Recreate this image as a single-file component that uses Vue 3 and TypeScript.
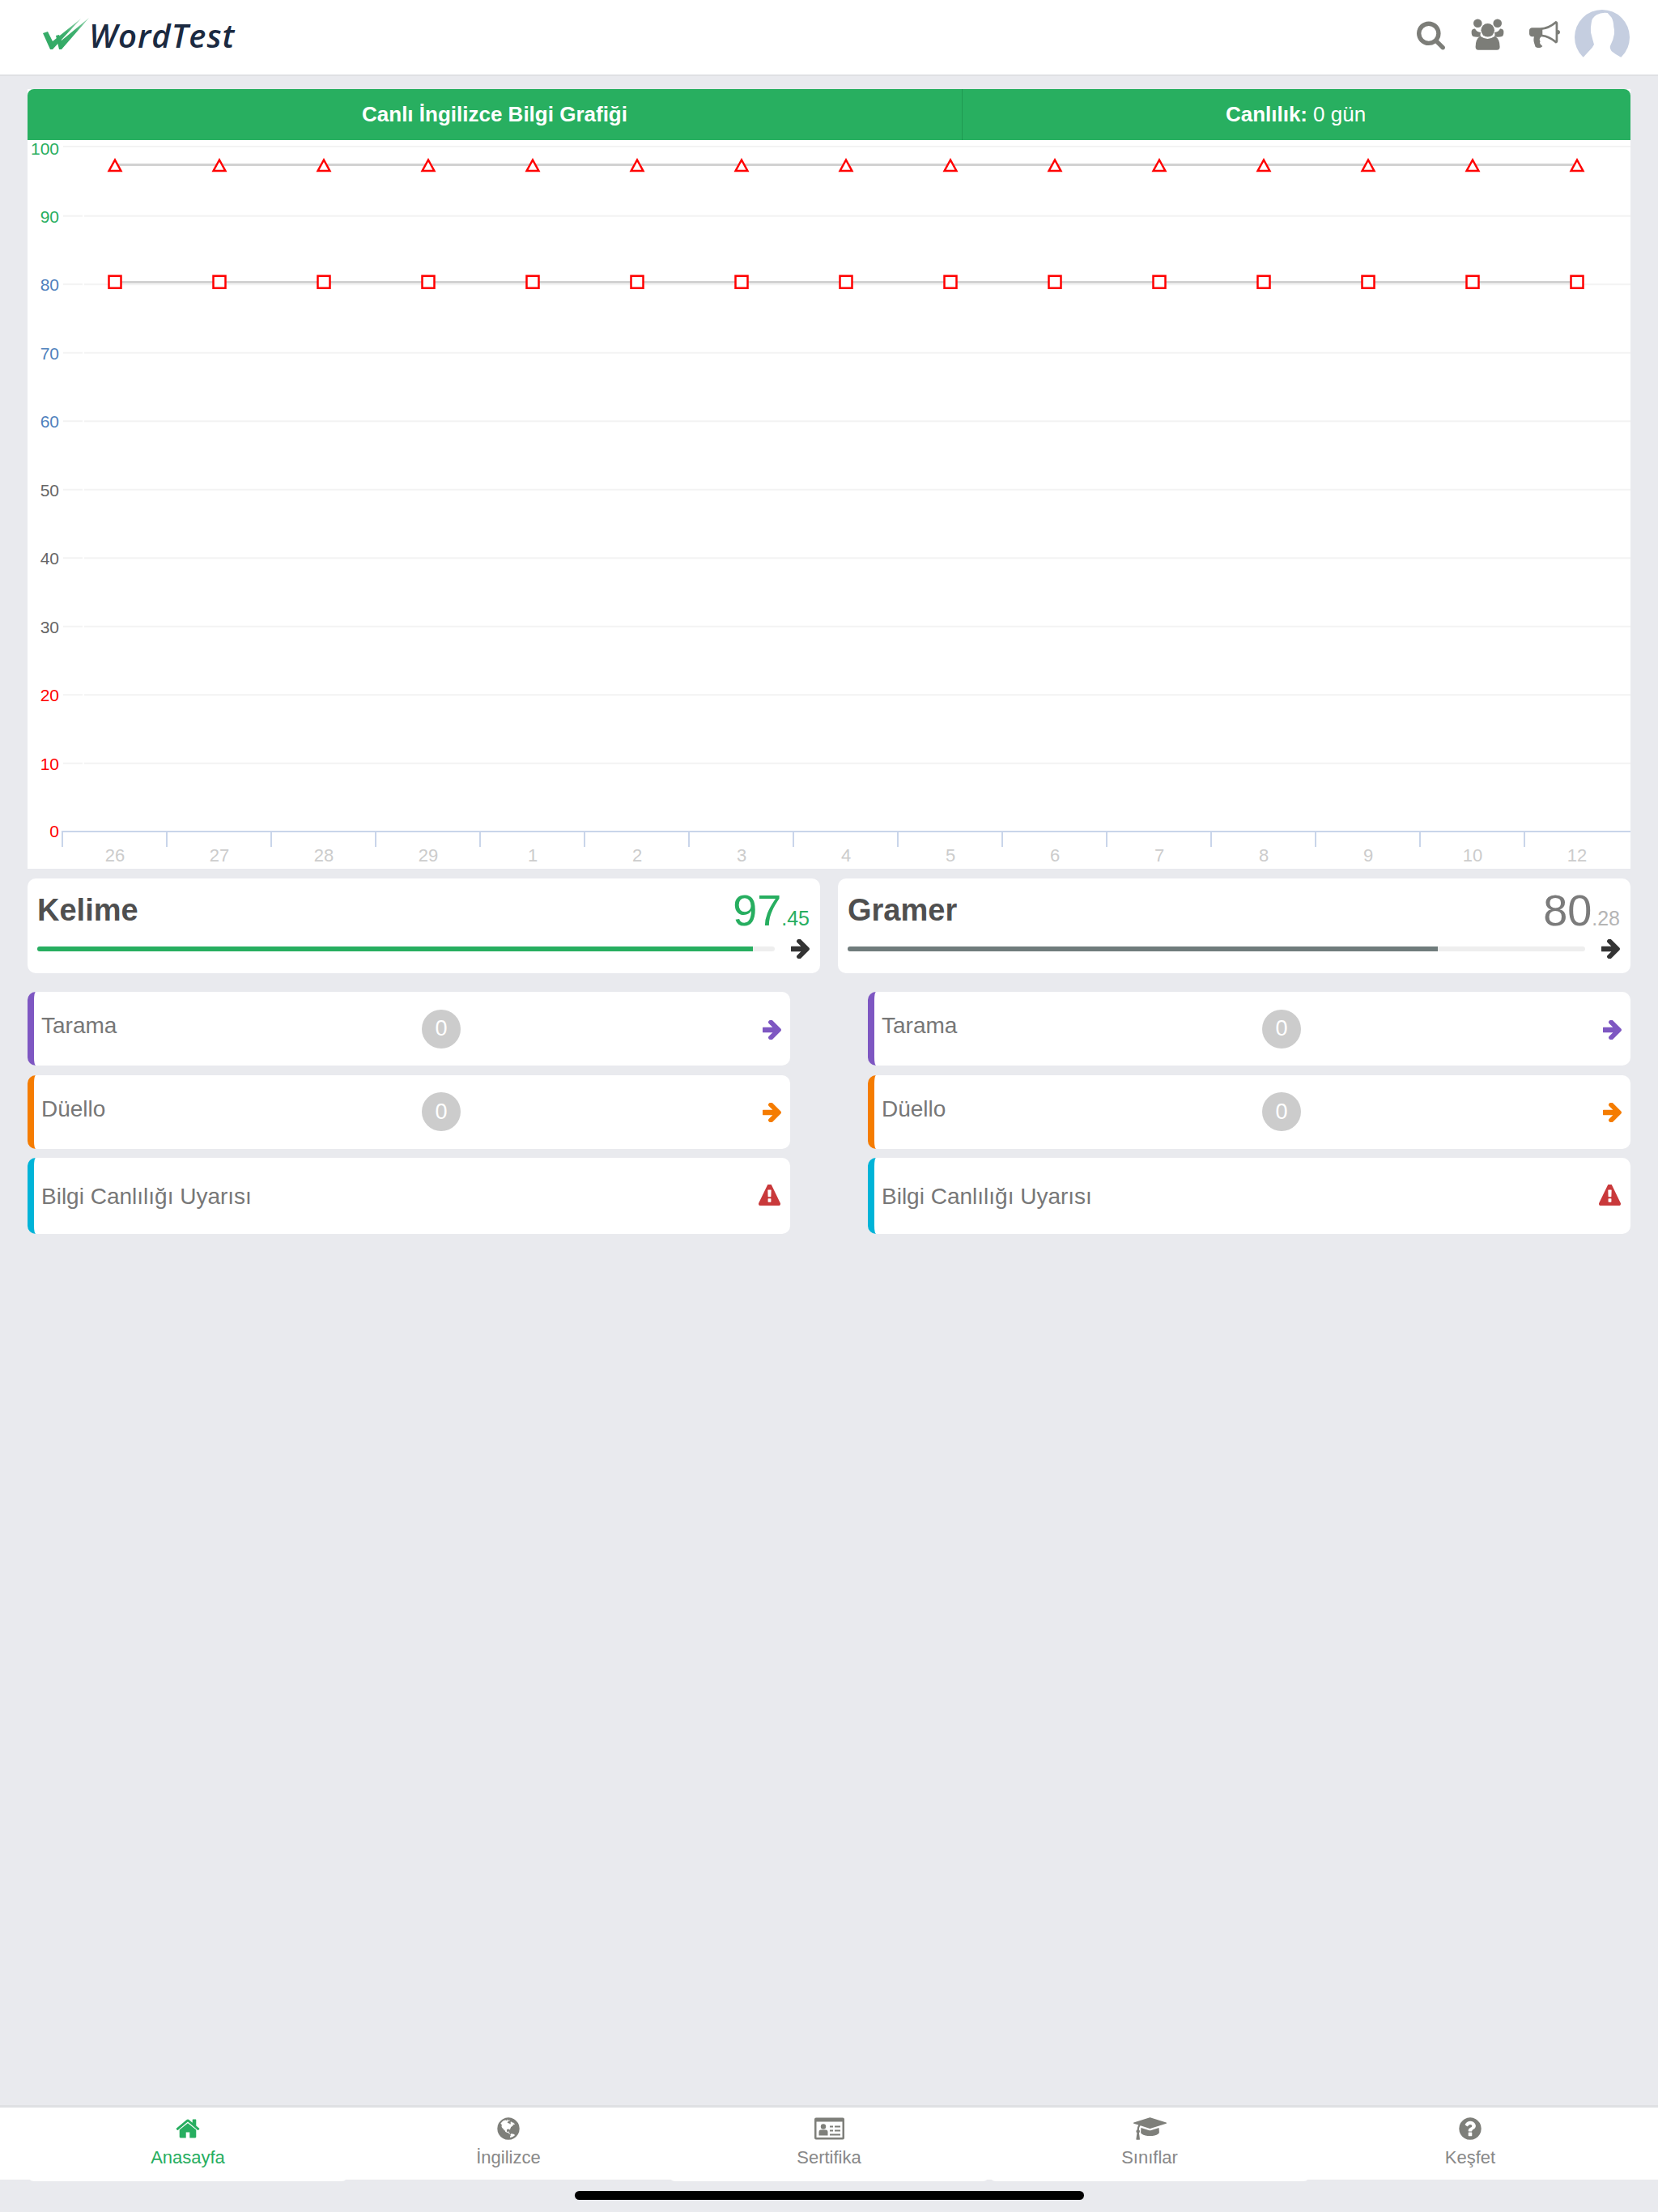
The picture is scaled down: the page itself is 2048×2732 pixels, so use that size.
<template>
  <div class="page">
    <header class="topbar">
      <div class="logo">
        <svg class="logo-mark" viewBox="0 0 60 42" width="60" height="42">
          <defs>
            <linearGradient id="tick" x1="0" y1="1" x2="1" y2="0">
              <stop offset="0" stop-color="#2fa862" />
              <stop offset="0.6" stop-color="#3fb070" />
              <stop offset="1" stop-color="#a9dcbd" />
            </linearGradient>
          </defs>
          <path d="M1 19 L7 17 L13 29 L48 1 L13 39 L10 39 Z" fill="url(#tick)" />
          <path d="M17 22 L21 21 L24 28 L58 0 L24 39 L21 39 Z" fill="url(#tick)" />
        </svg>
        <span class="logo-text">WordTest</span>
      </div>
      <div class="top-icons">
        <svg class="ic-search" viewBox="64 128 1664 1664"><path :d="icons.search" /></svg>
        <svg class="ic-users" viewBox="0 0 41 39">
          <circle cx="8.300" cy="5.700" r="5.300" />
          <circle cx="32.700" cy="5.700" r="5.300" />
          <path d="M.7 15 Q1.500 12 5 12.500 Q7 16.500 12 17 Q11 20 12 22.500 Q6 23 2.500 22 Q.3 20.500 .7 15Z" />
          <path d="M40.300 15 Q39.500 12 36 12.500 Q34 16.500 29 17 Q30 20 29 22.500 Q35 23 38.500 22 Q40.700 20.500 40.300 15Z" />
          <circle cx="20.700" cy="14.300" r="8.300" />
          <path d="M9 38.700 L32 38.700 Q35.600 38.700 35.600 35 Q35.600 25 29.500 21.800 Q20.500 28 11.500 21.800 Q5.600 25 5.600 35 Q5.600 38.700 9 38.700Z" />
        </svg>
        <svg class="ic-horn" viewBox="0 128 1792 1536" preserveAspectRatio="none"><path :d="icons.bullhorn" /></svg>
        <svg class="avatar" viewBox="0 0 68 68" width="68" height="68">
          <circle cx="34" cy="34" r="34" fill="#c5cee0" />
          <path d="M40.700 4 Q33 3 27.300 6.300 Q21 10 20.700 16.300 Q19.500 22 20 28 Q22 36 24 43 Q22 47 19 49.700 Q15 54 10.700 58.700 L10.700 68 L57.300 68 L57.300 58.700 Q50 55 45.700 51.300 Q43 47 44 44.700 Q48 37 49 29.700 Q49.500 25 48.300 21.300 Q48 14 45.700 9.700 Z" fill="#fff" />
          <rect x="0" y="59" width="68" height="9" fill="#fff" />
        </svg>
      </div>
    </header>

    <main class="content">
      <section class="chart-card">
        <div class="chart-head">
          <div class="head-cell main-cell">Canlı İngilizce Bilgi Grafiği</div>
          <div class="head-cell side-cell"><b>Canlılık:</b> 0 gün</div>
        </div>
        <svg class="chart" viewBox="34 173 1980 900" width="1980" height="900">
          <g v-for="t in yTicks" :key="t.value">
            <template v-if="t.value > 0">
              <line x1="78" :x2="t.value === 100 ? 2014 : 102" :y1="t.y" :y2="t.y" stroke="#f3f3f3" stroke-width="2" />
              <line v-if="t.value < 100" x1="104" x2="2014" :y1="t.y" :y2="t.y" stroke="#f3f3f3" stroke-width="2" />
            </template>
            <text class="y-label" x="73" :y="t.labelY" :fill="t.color">{{ t.value }}</text>
          </g>
          <line x1="76" x2="2014" y1="1027" y2="1027" stroke="#c9d5ea" stroke-width="2" />
          <line v-for="x in xTicks" :key="x" :x1="x" :x2="x" y1="1027" y2="1046" stroke="#c9d5ea" stroke-width="2" />
          <text v-for="(d, i) in days" :key="i" class="x-label" :x="centerX(i)" y="1064">{{ d }}</text>

          <line :x1="centerX(0)" :x2="centerX(14)" y1="203.500" y2="203.500" stroke="#d2d2d2" stroke-width="3" />
          <line :x1="centerX(0)" :x2="centerX(14)" y1="348.500" y2="348.500" stroke="#d2d2d2" stroke-width="3" />
          <g v-for="(d, i) in days" :key="'m' + i">
            <path :d="`M${centerX(i)} 197.500 L${centerX(i) + 7.400} 211 L${centerX(i) - 7.400} 211 Z`" fill="#fff" stroke="#f00" stroke-width="2.500" />
            <rect :x="centerX(i) - 7.500" y="340.800" width="15" height="15" fill="#fff" stroke="#f00" stroke-width="2.500" />
          </g>
        </svg>
      </section>

      <section class="scores">
        <div v-for="s in scores" :key="s.title" class="score-card">
          <div class="score-top">
            <span class="score-title">{{ s.title }}</span>
            <span class="score-value" :style="{ color: s.color }">{{ s.whole }}<small :style="{ color: s.smallColor }">{{ s.fraction }}</small></span>
          </div>
          <div class="score-bottom">
            <div class="track"><div class="fill" :style="{ width: s.percent + '%', background: s.barColor }"></div></div>
            <svg class="arrow dark" viewBox="192 256 1408 1408"><path :d="icons.arrow" /></svg>
          </div>
        </div>
      </section>

      <section class="lists">
        <div v-for="col in 2" :key="col" class="list">
          <div class="row purple">
            <span class="row-label">Tarama</span>
            <span class="badge">0</span>
            <svg class="arrow" viewBox="192 256 1408 1408"><path :d="icons.arrow" /></svg>
          </div>
          <div class="row orange">
            <span class="row-label">Düello</span>
            <span class="badge">0</span>
            <svg class="arrow" viewBox="192 256 1408 1408"><path :d="icons.arrow" /></svg>
          </div>
          <div class="row cyan tall">
            <span class="row-label">Bilgi Canlılığı Uyarısı</span>
            <svg class="warn" viewBox="0 128 1792 1536" preserveAspectRatio="none"><path :d="icons.warning" /></svg>
          </div>
        </div>
      </section>
    </main>

    <nav class="tabs">
      <div v-for="t in tabs" :key="t.label" class="tab" :class="{ active: t.active, raised: t.raised }">
        <svg v-if="t.path" class="tab-icon" :viewBox="t.box" :width="t.width" height="32"><path :d="t.path" /></svg>
        <svg v-else class="tab-icon" viewBox="0 -2.500 37 32" width="37" height="32">
          <path fill-rule="evenodd" d="M2 0 H35 Q37 0 37 2 V25 Q37 27 35 27 H2 Q0 27 0 25 V2 Q0 0 2 0Z M2.500 5 V24.500 H34.500 V5Z" />
          <circle cx="11" cy="11" r="3.200" />
          <path d="M5.500 22 V18 Q5.500 15 8 15 H14 Q16.500 15 16.500 18 V22Z" />
          <path d="M19 10 H23 V12 H19Z M25 10 H32 V12 H25Z M19 15 H23 V17 H19Z M25 15 H32 V17 H25Z M19 20 H32 V22 H19Z" />
        </svg>
        <span class="tab-label">{{ t.label }}</span>
      </div>
    </nav>
    <div class="home-zone"><div class="home-bar"></div></div>
  </div>
</template>

<script setup lang="ts">
const icons = {
  search:
    'M1216 832q0-185-131.500-316.500t-316.500-131.500-316.500 131.500-131.500 316.500 131.500 316.500 316.500 131.500 316.500-131.500 131.500-316.500zm512 832q0 52-38 90t-90 38q-54 0-90-38l-343-342q-179 124-399 124-143 0-273.500-55.500t-225-150-150-225-55.500-273.500 55.500-273.500 150-225 225-150 273.500-55.500 273.500 55.500 225 150 150 225 55.500 273.500q0 220-124 399l343 343q37 37 37 90z',
  bullhorn:
    'M1664 640q53 0 90.500 37.500t37.500 90.500-37.500 90.500-90.500 37.500v384q0 52-38 90t-90 38q-417-347-812-380-58 19-91 66t-31 100.500 40 92.500q-20 33-23 65.500t6 58 33.500 55 48 50 61.500 50.500q-29 58-111.500 83t-168.500 11.500-132-55.500q-7-23-29.500-87.500t-32-94.500-23-89-15-101 3.500-98.500 22-110.500h-122q-66 0-113-47t-47-113v-192q0-66 47-113t113-47h480q435 0 896-384 52 0 90 38t38 90v384zm-128 604v-954q-394 302-768 343v270q377 42 768 341z',
  arrow:
    'M1600 960q0 54-37 91l-651 651q-39 37-91 37-51 0-90-37l-75-75q-38-38-38-91t38-91l293-293h-704q-52 0-84.500-37.500t-32.500-90.500v-128q0-53 32.500-90.500t84.500-37.500h704l-293-294q-38-36-38-90t38-90l75-75q38-38 90-38 53 0 91 38l651 651q37 35 37 90z',
  warning:
    'M1024 1375v-190q0-14-9.500-23.500t-22.500-9.500h-192q-13 0-22.500 9.500t-9.500 23.500v190q0 14 9.500 23.500t22.500 9.500h192q13 0 22.500-9.500t9.500-23.500zm-2-374l18-459q0-12-10-19-13-11-24-11h-220q-11 0-24 11-10 7-10 21l17 457q0 10 10 16.500t24 6.500h185q14 0 23.500-6.500t10.500-16.500zm-14-934l768 1408q35 63-2 126-17 29-46.500 46t-63.500 17h-1536q-34 0-63.500-17t-46.500-46q-37-63-2-126l768-1408q17-31 47-49t65-18 65 18 47 49z',
  home:
    'M1472 992v480q0 26-19 45t-45 19h-384v-384h-256v384h-384q-26 0-45-19t-19-45v-480q0-1 .5-3t.5-3l575-474 575 474q1 2 1 6zm223-69l-62 74q-8 9-21 11h-3q-13 0-21-7l-692-577-692 577q-12 8-24 7-13-2-21-11l-62-74q-8-10-7-23.500t11-21.500l719-599q32-26 76-26t76 26l244 204v-195q0-14 9-23t23-9h192q14 0 23 9t9 23v408l219 182q10 8 11 21.500t-7 23.500z',
  globe:
    'M896 128q209 0 385.500 103t279.500 279.500 103 385.500-103 385.500-279.500 279.500-385.500 103-385.500-103-279.500-279.500-103-385.500 103-385.500 279.500-279.500 385.500-103zm274 521q-2 1-9.500 9.500t-13.500 9.500q2 0 4.500-5t5-11 3.500-7q6-7 22-15 14-6 52-12 34-8 51 11-2-2 9.500-13t14.500-12q3-2 15-4.500t15-7.500l2-22q-12 1-17.500-7t-6.500-21q0 2-6 8 0-7-4.500-8t-11.500 1-9 1q-10-3-15-7.500t-8-16.500-4-15q-2-5-9.500-11t-9.500-10q-1-2-2.500-5.500t-3-6.500-4-5.500-5.500-2.500-7 5-7.500 10-4.500 5q-3-2-6-1.500t-4.500 1-4.500 3-5 3.500q-3 2-8.500 3t-8.500 2q15-5-1-11-10-4-16-3 9-4 7.500-12t-8.500-14h5q-1-4-8.500-8.500t-17.500-8.500-13-6q-8-5-34-9.500t-33-.5q-5 6-4.500 10.500t4 14 3.500 12.500q1 6-5.500 13t-6.500 12q0 7 14 15.500t10 21.500q-3 8-16 16t-16 12q-5 8-1.500 18.500t10.500 16.500q2 2 1.500 4t-3.500 4.500-5.500 4-6.500 3.500l-3 2q-11 5-20.500-6t-13.500-26q-7-25-16-30-23-8-29 1-5-13-41-26-25-9-58-4 6-1 0-15-7-15-19-12 3-6 4-17.500t1-13.500q3-13 12-23 1-1 7-8.500t9.500-13.500.5-6q35 4 50-11 5-5 11.500-17t10.500-17q9-6 14-5.500t14.500 5.500 14.500 5q14 1 15.500-11t-7.500-20q12 1 3-17-4-7-8-9-12-4-27 5-8 4 2 8-1-1-9.500 10.500t-16.500 17.500-14-13q-1-1-5.500-13.500t-9.500-13.500q-8 0-16 15 3-8-11-15t-24-8q19-12-8-27-7-4-20.500-5t-19.500 4q-5 7-5.500 11.500t5 8 10.500 5.500 11.500 4 8.500 3q14 10 8 14-2 1-8.500 3.500t-11.500 4.500-6 4q-3 4 0 14t-2 14q-5-5-9-17.500t-7-16.500q7 9-25 6l-10-1q-4 0-16 2t-20.500 1-13.500-8q-4-8 0-20 1-4 4-2-4-3-11-9.500t-10-8.500q-46 15-94 41 6 1 12-1 5-2 13-6.500t10-5.500q34-14 42-7l5-5q14 16 20 25-7-4-30-1-20 6-22 12 7 12 5 18-4-3-11.500-10t-14.500-11-15-5q-16 0-22 1-146 80-235 222 7 7 12 8 4 1 5 9t2.500 11 11.500-3q9 8 3 19 1-1 44 27 19 17 21 21 3 11-10 18-1-2-9-9t-9-4q-3 5 .5 18.500t10.500 12.500q-7 0-9.500 16t-2.500 35.500-1 23.500l2 1q-3 12 5.500 34.500t21.500 19.500q-13 3 20 43 6 8 8 9 3 2 12 7.500t15 10 10 10.500q4 5 10 22.500t14 23.500q-2 6 9.500 20t10.500 23q-1 0-2.500 1t-2.500 1q3 7 15.500 14t15.500 13q1 3 2 10t3 11 8 2q2-20-24-62-15-25-17-29-3-5-5.500-15.500t-4.500-14.500q2 0 6 1.500t8.500 3.500 7.500 4 2 3q-3 7 2 17.500t12 18.500 17 19 12 13q6 6 14 19.500t0 13.500q9 0 20 10.500t17 19.500q5 8 8 26t5 24q2 7 8.500 13.500t12.500 9.500l16 8 13 7q5 2 18.500 10.500t21.500 11.500q10 4 16 4t14.500-2.500 13.500-3.500q15-2 29 15t21 21q36 19 55 11-2 1 .5 7.500t8 15.500 9 14.500 5.500 8.500q5 6 18 15t18 15q6-4 7-9-3 8 7 20t18 10q14-3 14-32-31 15-49-18 0-1-2.500-5.500t-4-8.500-2.500-8.500 0-7.500 5-3q9 0 10-3.500t-2-12.500-4-13q-1-8-11-20t-12-15q-5 9-16 8t-16-9q0 1-1.500 5.500t-1.500 6.500q-13 0-15-1 1-3 2.500-17.500t3.500-22.500q1-4 5.500-12t7.500-14.500 4-12.500-4.500-9.500-17.500-2.500q-19 1-26 20-1 3-3 10.500t-5 11.500-9 7q-7 3-24 2t-24-5q-13-8-22.500-29t-9.500-37q0-10 2.500-26.500t3-25-5.500-24.500q3-2 9-9.500t10-10.500q2-1 4.500-1.500t4.500 0 4-1.500 3-6q-1-1-4-3-3-3-4-3 7 3 28.500-1.500t27.500 1.500q15 11 22-2 0-1-2.500-9.500t-.5-13.500q5 27 29 9 3 3 15.500 5t17.500 5q3 2 7 5.500t5.500 4.500 5-.5 8.500-6.500q10 14 12 24 11 40 19 44 7 3 11 2t4.500-9.500 0-14-1.500-12.500l-1-8v-18l-1-8q-15-3-18.500-12t1.500-18.500 15-18.500q1-1 8-3.500t15.500-6.500 12.500-8q21-19 15-35 7 0 11-9-1 0-5-3t-7.500-5-4.500-2q9-5 2-16 5-3 7.500-11t7.500-10q9 12 21 2 8-8 1-16 5-7 20.500-10.500t18.500-9.500q7 2 8-2t1-12 3-12q4-5 15-9t13-5l17-11q3-4 0-4 18 2 31-11 10-11-6-20 3-6-3-9.500t-15-5.500q3-1 11.500-.5t10.500-1.500q15-10-7-16-17-5-43 12zm-163 877q206-36 351-189-3-3-12.500-4.500t-12.500-3.500q-18-7-24-8 1-7-2.500-13t-8-9-12.500-8-11-7q-2-2-7-6t-7-5.500-7.500-4.500-8.500-2-10 1l-3 1q-3 1-5.500 2.500t-5.500 3-4 3 0 2.500q-21-17-36-22-5-1-11-5.500t-10.500-7-10-1.500-11.500 7q-5 5-6 15t-2 13q-7-5 0-17.500t2-18.500q-3-6-10.500-4.500t-12 4.500-11.500 8.500-9 6.500-8.500 5.500-8.500 7.500q-3 4-6 12t-5 11q-2-4-11.500-6.500t-9.500-5.500q2 10 4 35t5 38q7 31-12 48-27 25-29 40-4 22 12 26 0 7-8 20.500t-7 21.500q0 6 2 16z',
  cap:
    'M1774 836l18 316q4 69-82 128t-235 93.500-323 34.500-323-34.500-235-93.500-82-128l18-316 574 181q22 7 48 7t48-7zm530-324q0 23-22 31l-1120 352q-4 1-10 1t-10-1l-652-206q-43 34-71 111.500t-34 178.500q63 36 63 109 0 69-58 107l58 433q2 14-8 25-9 11-24 11h-192q-15 0-24-11-10-11-8-25l58-433q-58-38-58-107 0-73 65-111 11-207 98-330l-333-104q-22-8-22-31t22-31l1120-352q4-1 10-1t10 1l1120 352q22 8 22 31z',
  question:
    'M1024 1376v-192q0-14-9-23t-23-9h-192q-14 0-23 9t-9 23v192q0 14 9 23t23 9h192q14 0 23-9t9-23zm256-672q0-88-55.500-163t-138.500-116-170-41q-243 0-371 213-15 24 8 42l132 100q7 6 19 6 16 0 25-12 53-68 86-92 34-24 86-24 48 0 85.500 26t37.500 59q0 38-20 61t-68 45q-63 28-115.500 86.500t-52.500 125.500v36q0 14 9 23t23 9h192q14 0 23-9t9-23q0-19 21.500-49.500t54.500-49.500q32-18 49-28.500t46-35 44.500-48 28-60.500 12.500-81zm384 192q0 209-103 385.500t-279.500 279.500-385.500 103-385.500-103-279.500-279.500-103-385.500 103-385.500 279.500-279.500 385.500-103 385.500 103 279.500 279.500 103 385.500z'
};

const labelColor = (v: number) => {
  if (v >= 90) return '#27ae60';
  if (v >= 60) return '#4f81bd';
  if (v >= 30) return '#666666';
  return '#ff0000';
};

const yTicks = Array.from({ length: 11 }, (_, i) => {
  const value = 100 - i * 10;
  const y = value === 100 ? 181 : 942.7 - 84.5 * (value / 10 - 1);
  const labelY = value === 100 ? 191 : value === 0 ? 1034 : y + 8;
  return { value, y, labelY, color: labelColor(value) };
});

const days = [26, 27, 28, 29, 1, 2, 3, 4, 5, 6, 7, 8, 9, 10, 12];
const centerX = (i: number) => 142 + 129 * i;
const xTicks = Array.from({ length: 15 }, (_, i) => 77 + 129 * i);

const scores = [
  { title: 'Kelime', whole: '97', fraction: '.45', percent: 97, color: '#27ae60', smallColor: '#27ae60', barColor: '#27ae60' },
  { title: 'Gramer', whole: '80', fraction: '.28', percent: 80, color: '#7b7b7b', smallColor: '#b5b5b5', barColor: '#707c7c' }
];

const tabs = [
  { label: 'Anasayfa', path: icons.home, box: '0 0 1792 1792', width: 32, active: true, raised: true },
  { label: 'İngilizce', path: icons.globe, box: '0 0 1792 1792', width: 32, active: false, raised: false },
  { label: 'Sertifika', path: '', box: '', width: 37, active: false, raised: true },
  { label: 'Sınıflar', path: icons.cap, box: '0 0 2304 1792', width: 41, active: false, raised: true },
  { label: 'Keşfet', path: icons.question, box: '0 0 1792 1792', width: 32, active: false, raised: false }
];
</script>

<style>
html,
body {
  margin: 0;
  background: #e9eaee;
}
</style>

<style scoped>
.page {
  display: flex;
  flex-direction: column;
  width: 2048px;
  height: 2732px;
  background: #e9eaee;
  font-family: "Liberation Sans", Arial, sans-serif;
}

.topbar {
  display: flex;
  align-items: flex-start;
  justify-content: space-between;
  height: 92px;
  background: #fff;
  border-bottom: 2px solid #dfe0e3;
  flex-shrink: 0;
}
.logo {
  display: flex;
  align-items: flex-start;
  margin: 22px 0 0 52px;
}
.logo-mark {
  flex-shrink: 0;
}
.logo-text {
  font-family: "Open Sans", sans-serif;
  font-style: italic;
  font-weight: 600;
  font-size: 40px;
  line-height: 40px;
  letter-spacing: 1px;
  color: #1b2a41;
  margin: 2px 0 0 -2px;
}
.top-icons {
  display: flex;
  align-items: flex-start;
  margin-right: 35px;
}
.top-icons svg {
  fill: #7c7d78;
  display: block;
}
.ic-search {
  width: 35px;
  height: 36px;
  margin-top: 26px;
}
.ic-users {
  width: 41px;
  height: 39px;
  margin: 23px 0 0 32px;
}
.ic-horn {
  width: 38px;
  height: 33px;
  margin: 26px 0 0 31px;
}
.avatar {
  margin: 12px 0 0 18px;
}

.content {
  flex: 1;
  padding: 16px 34px 0;
}

.chart-card {
  background: #fff;
}
.chart-head {
  display: flex;
  height: 63px;
  background: #28af60;
  border-radius: 8px 8px 0 0;
  color: #fff;
  font-size: 26px;
}
.head-cell {
  display: flex;
  align-items: center;
  justify-content: center;
  gap: 7px;
}
.main-cell {
  width: 1154px;
  font-weight: bold;
  border-right: 1px solid #1f9a52;
}
.side-cell {
  flex: 1;
  padding-right: 2px;
}
.chart {
  display: block;
}
.y-label {
  font-size: 21px;
  text-anchor: end;
}
.x-label {
  font-size: 22px;
  text-anchor: middle;
  fill: #ccc;
}

.scores {
  display: grid;
  grid-template-columns: 979px 979px;
  gap: 22px;
  margin-top: 12px;
}
.score-card {
  height: 117px;
  box-sizing: border-box;
  background: #fff;
  border-radius: 10px;
  padding: 12px 13px 0 12px;
}
.score-top {
  display: flex;
  justify-content: space-between;
  align-items: flex-start;
  height: 54px;
}
.score-title {
  font-size: 38px;
  line-height: 38px;
  font-weight: bold;
  color: #4f4f4f;
  margin-top: 8px;
}
.score-value {
  font-size: 54px;
  line-height: 54px;
}
.score-value small {
  font-size: 25px;
  line-height: 0;
}
.score-bottom {
  display: flex;
  align-items: center;
  gap: 20px;
  margin-top: 9px;
}
.track {
  flex: 1;
  height: 6px;
  background: #eee;
  border-radius: 4px;
  overflow: hidden;
}
.fill {
  height: 100%;
}
.arrow {
  display: block;
  width: 23px;
  height: 24px;
  flex-shrink: 0;
}
.arrow.dark {
  fill: #333;
}

.lists {
  display: grid;
  grid-template-columns: 942px 942px;
  gap: 96px;
  margin-top: 23px;
}
.list {
  display: flex;
  flex-direction: column;
  gap: 11.5px;
}
.row {
  display: flex;
  align-items: center;
  height: 91px;
  box-sizing: border-box;
  background: #fff;
  border-left: 8px solid;
  border-radius: 10px;
  padding: 0 11px 0 9px;
}
.row.tall {
  height: 94px;
}
.row.purple {
  border-left-color: #7e57c2;
  fill: #7e57c2;
}
.row.orange {
  border-left-color: #f57c00;
  fill: #f57c00;
}
.row.cyan {
  border-left-color: #00b4d8;
}
.row-label {
  font-size: 28px;
  color: #777;
  width: 470px;
  padding-bottom: 7px;
  white-space: nowrap;
}
.tall .row-label {
  padding: 2px 0 0;
}
.badge {
  width: 48px;
  height: 48px;
  border-radius: 50%;
  background: #ccc;
  color: #fff;
  font-size: 27px;
  display: flex;
  align-items: center;
  justify-content: center;
}
.row .arrow {
  margin: 2px 0 0 auto;
}
.warn {
  display: block;
  width: 27px;
  height: 26px;
  margin: 0 1px 2px auto;
  fill: #c9393b;
}

.tabs {
  display: grid;
  grid-template-columns: repeat(5, 396px);
  height: 89px;
  padding: 0 34px;
  background: #fff;
  border-top: 3px solid #dfe0e3;
  flex-shrink: 0;
}
.tab {
  display: flex;
  flex-direction: column;
  align-items: center;
  height: 89px;
  padding-top: 10px;
  box-sizing: border-box;
  fill: #7e7f7a;
  color: #888;
}
.tab.raised {
  height: 91px;
  background: #fff;
  border-radius: 0 0 8px 8px;
}
.tab.active {
  fill: #27ae60;
  color: #27ae60;
}
.tab-icon {
  display: block;
  flex-shrink: 0;
}
.tab-label {
  font-size: 22px;
  line-height: 26px;
  margin-top: 7px;
}

.home-zone {
  flex-shrink: 0;
  height: 40px;
  display: flex;
  justify-content: center;
  padding-top: 14px;
  box-sizing: border-box;
}
.home-bar {
  width: 629px;
  height: 11px;
  background: #000;
  border-radius: 6px;
}
</style>
